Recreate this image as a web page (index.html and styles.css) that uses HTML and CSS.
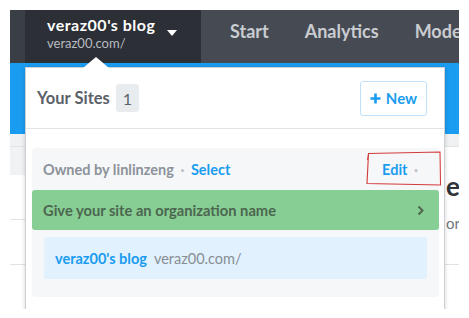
FILE: index.html
```html
<!DOCTYPE html>
<html lang="en">
<head>
    <meta charset="UTF-8">
    <meta name="viewport" content="width=device-width, initial-scale=1.0">
    <title>Your Sites</title>
    <link rel="stylesheet" href="styles.css">
</head>
<body>
    <div class="frame">
        <header class="navbar">
            <div class="nav-edge"></div>
            <div class="site-switch">
                <div class="site-text">
                    <div class="site-name">veraz00's blog</div>
                    <div class="site-url">veraz00.com/</div>
                </div>
                <span class="caret"></span>
            </div>
            <nav class="nav-links">
                <a href="#">Start</a>
                <a href="#">Analytics</a>
                <a href="#">Mode</a>
            </nav>
        </header>
        <div class="hero"></div>
        <div class="subnav"></div>
        <div class="page">
            <aside class="sidebar">
                <div class="side-head"></div>
                <div class="side-item"></div>
                <div class="side-item"></div>
            </aside>
            <main class="main">
                <h2 class="page-title">e</h2>
                <p class="page-lead">or</p>
            </main>
        </div>

        <div class="sites-menu">
            <div class="menu-head">
                <div class="menu-title">Your Sites <span class="badge">1</span></div>
                <button class="new-button" type="button">
                    <svg width="11" height="11" viewBox="0 0 11 11"><path d="M5.5 0.5v10M0.5 5.5h10" stroke="currentColor" stroke-width="2.6"/></svg>
                    New
                </button>
            </div>
            <div class="menu-body">
                <div class="site-group">
                    <div class="owner-row">
                        <div class="owner">Owned by linlinzeng <span class="dot">&middot;</span> <a href="#" class="link">Select</a></div>
                        <div class="owner-actions"><a href="#" class="link">Edit</a> <span class="dot">&middot;</span></div>
                    </div>
                    <a href="#" class="org-bar">
                        <span>Give your site an organization name</span>
                        <svg width="7" height="11" viewBox="0 0 7 11"><path d="M1.5 1.5l4 4-4 4" fill="none" stroke="currentColor" stroke-width="2"/></svg>
                    </a>
                    <a href="#" class="site-item">
                        <span class="site-item-name">veraz00's blog</span>
                        <span class="site-item-url">veraz00.com/</span>
                    </a>
                </div>
            </div>
        </div>

        <svg class="annotation" width="90" height="48" viewBox="350 134 90 48">
            <path d="M358.5 143.5 L430 142 L430.5 175 L357 173.5 Z M358.5 143.5 L357.5 150" fill="none" stroke="#d23b3b" stroke-width="1.1"/>
        </svg>
    </div>
</body>
</html>
```

FILE: styles.css
```css
body {
    margin: 0;
    padding: 10px;
    background: #ffffff;
    font-family: Lato, "Open Sans", sans-serif;
}
a {
    text-decoration: none;
}
.frame {
    position: relative;
    width: 449px;
    height: 299px;
    overflow: hidden;
    background: #ffffff;
}
.navbar {
    display: flex;
    height: 53px;
    background-color: #464b53;
}
.nav-edge {
    width: 15px;
    flex-shrink: 0;
    background-color: #3a3e45;
}
.site-switch {
    width: 154px;
    flex-shrink: 0;
    padding: 0 0 6px 22px;
    display: flex;
    align-items: center;
    background-color: #2c2f35;
}
.site-name {
    color: #ffffff;
    font-weight: 700;
    font-size: 16px;
    letter-spacing: 0.5px;
    line-height: 19px;
}
.site-url {
    color: #b7bbc1;
    font-size: 13px;
    line-height: 18px;
}
.caret {
    margin: 0 0 2px 12px;
    border-top: 6px solid #ffffff;
    border-left: 5px solid transparent;
    border-right: 5px solid transparent;
}
.nav-links {
    display: flex;
    align-items: center;
    min-width: 0;
    padding: 0 0 11px 11px;
    white-space: nowrap;
}
.nav-links a {
    padding: 0 18px;
    color: #c9ccd1;
    font-weight: 700;
    font-size: 18px;
}
.hero {
    height: 71px;
    background-color: #1a9cf0;
}
.subnav {
    height: 12px;
    background-color: #eff1f3;
    border-bottom: 1px solid #e2e5e8;
}
.page {
    display: flex;
}
.sidebar {
    width: 15px;
    flex-shrink: 0;
}
.side-head {
    height: 28px;
    background-color: #f0f2f4;
}
.side-item {
    height: 44px;
    border-bottom: 1px solid #dfe2e6;
}
.main {
    flex: 1;
    min-width: 0;
    height: 117px;
    border-bottom: 1px solid #dfe2e6;
}
.page-title {
    margin: 24px 0 0;
    padding-left: 421px;
    font-size: 26px;
    line-height: 30px;
    color: #2f3338;
}
.page-lead {
    margin: 12px 0 0;
    padding-left: 421px;
    font-size: 15px;
    line-height: 20px;
    color: #6f757c;
}

/* sites dropdown */
.sites-menu {
    position: absolute;
    left: 15px;
    top: 57px;
    bottom: -2px;
    width: 418px;
    background: #ffffff;
    border: 1px solid #cdd1d6;
    box-shadow: 0 1px 4px rgba(0, 0, 0, 0.18);
}
.sites-menu::before {
    content: "";
    position: absolute;
    left: 57px;
    top: -11px;
    border-left: 13px solid transparent;
    border-right: 13px solid transparent;
    border-bottom: 11px solid #ffffff;
}
.menu-head {
    height: 60px;
    display: flex;
    align-items: center;
    justify-content: space-between;
    padding: 0 17px 0 11px;
    border-bottom: 1px solid #e1e4e8;
}
.menu-title {
    display: flex;
    align-items: center;
    gap: 6px;
    color: #5b6169;
    font-weight: 700;
    font-size: 16.5px;
}
.badge {
    width: 23px;
    height: 28px;
    display: flex;
    align-items: center;
    justify-content: center;
    background-color: #e9ecef;
    border-radius: 3px;
    font-weight: 400;
    font-size: 16px;
}
.new-button {
    width: 67px;
    height: 35px;
    display: flex;
    align-items: center;
    justify-content: center;
    gap: 5px;
    padding: 0;
    background: #ffffff;
    border: 1px solid #bfe1fa;
    border-radius: 3px;
    color: #1a9cf0;
    font-family: inherit;
    font-weight: 700;
    font-size: 15px;
}
.menu-body {
    padding: 19px 5px 12px 6px;
}
.site-group {
    background-color: #f6f7f9;
    border-radius: 4px;
    padding-bottom: 18px;
}
.owner-row {
    height: 42px;
    display: flex;
    align-items: center;
    justify-content: space-between;
    padding: 0 18px 0 11px;
    font-size: 14.5px;
    font-weight: 700;
}
.owner {
    color: #8c9299;
}
.dot {
    color: #b9bdc3;
    margin: 0 3px;
}
.link {
    color: #1a9cf0;
}
.org-bar {
    height: 40px;
    display: flex;
    align-items: center;
    justify-content: space-between;
    padding: 0 15px 0 11px;
    background-color: #87ce94;
    border-radius: 3px;
    color: #4c664f;
    font-weight: 700;
    font-size: 14.7px;
}
.site-item {
    height: 42px;
    margin: 7px 12px 0;
    padding: 0 11px;
    display: flex;
    align-items: center;
    gap: 7px;
    background-color: #e1f1fd;
    border-radius: 3px;
    font-size: 14.5px;
}
.site-item-name {
    color: #1a9cf0;
    font-weight: 700;
}
.site-item-url {
    color: #878d94;
}
.annotation {
    position: absolute;
    left: 350px;
    top: 134px;
}
```
